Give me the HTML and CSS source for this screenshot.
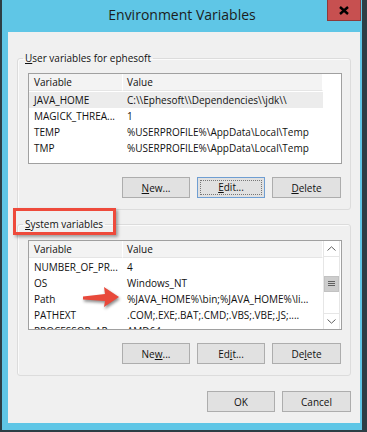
FILE: index.html
```html
<!DOCTYPE html>
<html lang="en">
<head>
    <meta charset="UTF-8">
    <title>Environment Variables</title>
    <link rel="stylesheet" href="styles.css">
</head>
<body>
    <div class="window">
        <div class="titlebar">
            <div class="title">Environment Variables</div>
            <button class="close" aria-label="Close">
                <svg width="10" height="9" viewBox="0 0 10 9"><path d="M1 1 L9 8 M9 1 L1 8" stroke="#000" stroke-width="2.4" fill="none"/></svg>
            </button>
        </div>
        <div class="client">
            <fieldset class="group user">
                <legend><u>U</u>ser variables for ephesoft</legend>
                <div class="listview">
                    <div class="rows">
                        <div class="row head"><span>Variable</span><span>Value</span></div>
                        <div class="row selected"><span>JAVA_HOME</span><span>C:\\Ephesoft\\Dependencies\\jdk\\</span></div>
                        <div class="row"><span>MAGICK_THREA...</span><span>1</span></div>
                        <div class="row"><span>TEMP</span><span>%USERPROFILE%\AppData\Local\Temp</span></div>
                        <div class="row"><span>TMP</span><span>%USERPROFILE%\AppData\Local\Temp</span></div>
                    </div>
                </div>
                <div class="actions">
                    <button><u>N</u>ew...</button>
                    <button class="focused"><span class="focus-ring"><u>E</u>dit...</span></button>
                    <button><u>D</u>elete</button>
                </div>
            </fieldset>
            <fieldset class="group system">
                <legend><u>S</u>ystem variables</legend>
                <div class="listview short">
                    <div class="rows">
                        <div class="row head"><span>Variable</span><span>Value</span></div>
                        <div class="row"><span>NUMBER_OF_PR...</span><span>4</span></div>
                        <div class="row"><span>OS</span><span>Windows_NT</span></div>
                        <div class="row"><span>Path</span><span>%JAVA_HOME%\bin;%JAVA_HOME%\li...</span></div>
                        <div class="row"><span>PATHEXT</span><span>.COM;.EXE;.BAT;.CMD;.VBS;.VBE;.JS;....</span></div>
                        <div class="row"><span>PROCESSOR_AR...</span><span>AMD64</span></div>
                    </div>
                    <div class="scrollbar">
                        <div class="sb-btn">
                            <svg width="9" height="5" viewBox="0 0 9 5"><path d="M0.5 4.5 L4.5 0.8 L8.5 4.5" stroke="#606060" fill="none"/></svg>
                        </div>
                        <div class="sb-track top"></div>
                        <div class="sb-thumb">
                            <svg width="7" height="6" viewBox="0 0 7 6"><path d="M0 0.5 H7 M0 2.5 H7 M0 4.5 H7" stroke="#606060" fill="none"/></svg>
                        </div>
                        <div class="sb-track"></div>
                        <div class="sb-btn">
                            <svg width="9" height="5" viewBox="0 0 9 5"><path d="M0.5 0.5 L4.5 4.2 L8.5 0.5" stroke="#606060" fill="none"/></svg>
                        </div>
                    </div>
                </div>
                <div class="actions">
                    <button>Ne<u>w</u>...</button>
                    <button>Ed<u>i</u>t...</button>
                    <button>De<u>l</u>ete</button>
                </div>
            </fieldset>
            <div class="actions dialog">
                <button>OK</button>
                <button>Cancel</button>
            </div>
        </div>

        <div class="callout-box"></div>
        <svg class="callout-arrow" width="44" height="28" viewBox="0 0 44 28">
            <polygon points="3,12.5 25,10 24,3 39,13 24,23 25,17 3,15.5" fill="#e8493b"/>
        </svg>
    </div>
</body>
</html>
```

FILE: styles.css
```css
* {
    box-sizing: border-box;
}
body {
    margin: 0;
    background: #2d3e45;
    font-family: "Open Sans", "Noto Sans", sans-serif;
    font-size: 10px;
    color: #111;
}
.window {
    position: relative;
    width: 367px;
    height: 432px;
    background: #5fc6e6;
    border-left: 2px solid #2d3e45;
    border-right: 5px solid #2d3e45;
    border-bottom: 2px solid #2d3e45;
    display: flex;
    flex-direction: column;
}
.titlebar {
    height: 32px;
    display: grid;
    grid-template-columns: 1fr auto 1fr;
}
.title {
    grid-column: 2;
    font-size: 14px;
    line-height: 30px;
    color: #1c1c1c;
}
.close {
    grid-column: 3;
    justify-self: end;
    align-self: start;
    margin-right: 1px;
    width: 34px;
    height: 21px;
    padding: 0;
    background: #c75050;
    border: 1px solid #8c3a3a;
    border-top: none;
    display: flex;
    align-items: center;
    justify-content: center;
}
.client {
    flex: 1;
    margin: 0 2px 7px 6px;
    background: #f0f0f0;
    padding: 0 9px;
    display: flex;
    flex-direction: column;
}
.group {
    margin: 0;
    padding: 7px 8px 11px 10px;
    border: 1px solid #dcdcdc;
    border-radius: 3px;
    box-shadow: inset 1px 1px 0 #fbfbfb;
}
.group.user {
    margin-top: 18px;
}
.group.system {
    margin-top: 6px;
    padding-top: 8px;
}
.group legend {
    padding: 0 2px;
    margin-left: -5px;
    line-height: 16px;
}
.listview {
    height: 91px;
    background: #fff;
    border: 1px solid #a0a0a0;
    display: flex;
    overflow: hidden;
}
.listview.short {
    height: 90px;
}
.rows {
    flex: 1;
}
.row {
    display: grid;
    grid-template-columns: 94px 200px;
    height: 16px;
    line-height: 16px;
    white-space: nowrap;
}
.row span {
    overflow: hidden;
    padding-left: 5px;
}
.row span + span {
    padding-left: 4px;
}
.row.head {
    height: 17px;
    line-height: 17px;
    margin-bottom: 1px;
}
.row.head span {
    background: #f3f3f3;
    border-right: 1px solid #fff;
    border-bottom: 1px solid #e5e5e5;
}
.row.selected {
    background: #ececec;
    width: 294px;
}
.scrollbar {
    width: 17px;
    margin-right: 1px;
    border-left: 1px solid #e6e6e6;
    border-right: 1px solid #e6e6e6;
    display: flex;
    flex-direction: column;
}
.sb-btn {
    height: 16px;
    display: flex;
    align-items: center;
    justify-content: center;
    border-bottom: 1px solid #e6e6e6;
}
.sb-btn:last-child {
    border-top: 1px solid #e6e6e6;
    border-bottom: none;
}
.sb-track {
    height: 20px;
}
.sb-track.top {
    height: 19px;
}
.sb-track + .sb-btn {
    margin-top: auto;
}
.sb-thumb {
    height: 16px;
    background: #cdcdcd;
    border: 1px solid #c2c2c2;
    display: flex;
    align-items: center;
    justify-content: center;
}
.actions {
    margin-top: 13px;
    display: flex;
    justify-content: flex-end;
    gap: 7px;
    padding-right: 1px;
}
.actions button {
    width: 68px;
    height: 21px;
    padding: 0;
    font: inherit;
    color: #111;
    background: #e1e1e1;
    border: 1px solid #adadad;
}
.actions button:last-child {
    width: 69px;
}
.actions button.focused {
    border-color: #6f9ed2;
    padding: 2px;
}
.focus-ring {
    display: block;
    height: 100%;
    line-height: 13px;
    border: 1px dotted #777;
}
.actions.dialog {
    margin-top: 15px;
    padding-right: 0;
}
.callout-box {
    position: absolute;
    left: 11px;
    top: 208px;
    width: 103px;
    height: 27px;
    border: 3px solid #ee4a3b;
    box-shadow: 2px 2px 3px rgba(0, 0, 0, 0.35);
}
.callout-arrow {
    position: absolute;
    left: 78px;
    top: 284px;
    filter: drop-shadow(1px 2px 1.5px rgba(0, 0, 0, 0.45));
}
```
